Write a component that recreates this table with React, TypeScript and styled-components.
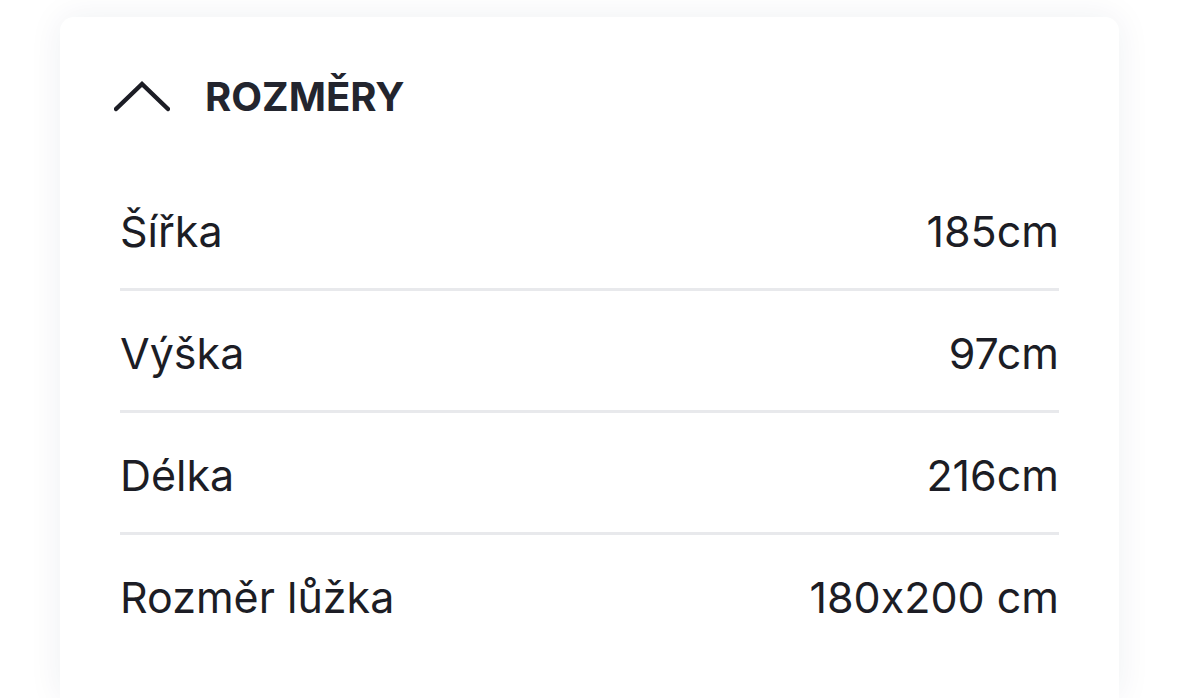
import React from 'react'
import styled, { createGlobalStyle } from 'styled-components'

const GlobalStyle = createGlobalStyle`
  html, body {
    margin: 0;
    padding: 0;
    background: #ffffff;
  }
  body {
    font-family: Inter, 'Noto Sans', sans-serif;
    font-feature-settings: 'calt' 0;
    color: #1c1d25;
    overflow: hidden;
  }
`

type Dimension = {
  label: string
  value: string
}

const dimensions: Dimension[] = [
  { label: 'Šířka', value: '185cm' },
  { label: 'Výška', value: '97cm' },
  { label: 'Délka', value: '216cm' },
  { label: 'Rozměr lůžka', value: '180x200 cm' },
]

const App: React.FC = () => {
  return (
    <>
      <GlobalStyle />
      <Page>
        <Card>
          <Header>
            <Chevron viewBox="0 0 56 32" aria-hidden="true">
              <path d="M2 29 L28 4 L54 29" />
            </Chevron>
            <Title>ROZMĚRY</Title>
          </Header>
          <List>
            {dimensions.map((d, i) => (
              <Row key={d.label} $last={i === dimensions.length - 1}>
                <Label>{d.label}</Label>
                <Value>{d.value}</Value>
              </Row>
            ))}
          </List>
        </Card>
      </Page>
    </>
  )
}
export default App

const Page = styled.div`
  display: flex;
  flex-direction: column;
  padding: 17px 60px 0;
  height: 698px;
  box-sizing: border-box;
`

const Card = styled.section`
  flex: 1;
  background: #ffffff;
  border-radius: 14px 14px 0 0;
  box-shadow: 0 0 34px rgba(30, 40, 80, 0.07);
  padding: 40px 60px 0;
  box-sizing: border-box;
`

const Header = styled.div`
  display: flex;
  align-items: center;
  gap: 35px;
  height: 78px;
  margin-left: -6px;
`

const Chevron = styled.svg`
  width: 56px;
  height: 32px;
  flex: none;
  path {
    fill: none;
    stroke: #1c1d25;
    stroke-width: 4.5;
    stroke-linecap: round;
    stroke-linejoin: miter;
  }
`

const Title = styled.h2`
  margin: 0;
  font-size: 40px;
  font-weight: 700;
  color: #23252e;
`

const List = styled.div`
  margin-top: 34px;
`

const Row = styled.div<{ $last: boolean }>`
  display: flex;
  align-items: center;
  justify-content: space-between;
  height: 122px;
  padding-top: 4px;
  box-sizing: border-box;
  border-bottom: 3px solid ${(p) => (p.$last ? 'transparent' : '#e8e9ec')};
  font-size: 43px;
  font-weight: 400;
`

const Label = styled.span``

const Value = styled.span``
